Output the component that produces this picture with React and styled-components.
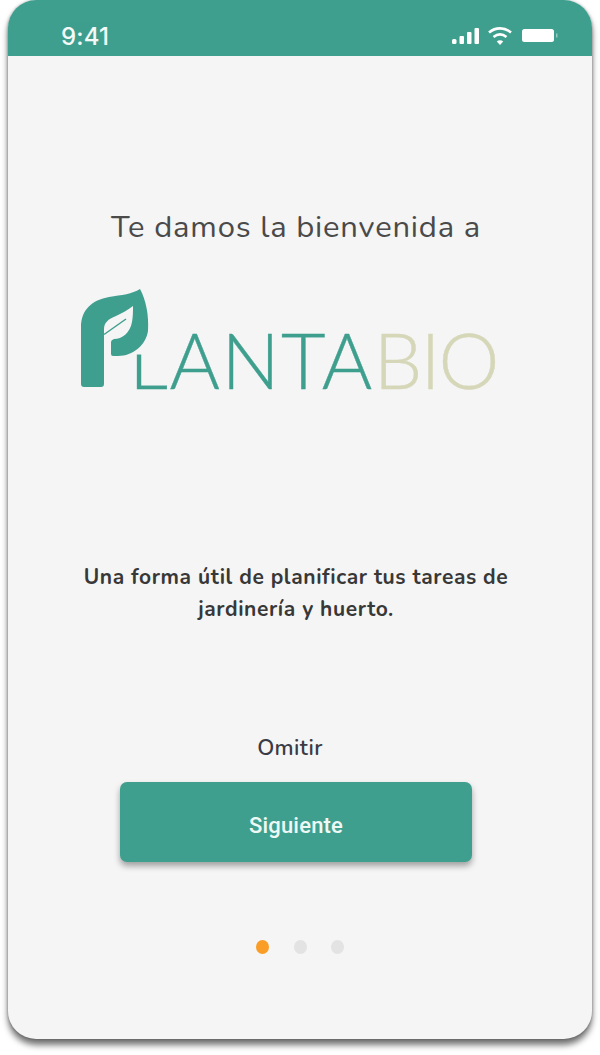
import React from "react";
import styled, { createGlobalStyle } from "styled-components";

const Global = createGlobalStyle`
  html, body { margin: 0; padding: 0; background: #fff; }
  body { width: 600px; height: 1055px; overflow: hidden; font-family: "Noto Sans", sans-serif; }
  * { box-sizing: border-box; }
`;
const Page = styled.div`
  width: 600px; height: 1055px; padding: 0 8px 16px;
`;
const Phone = styled.div`
  height: 1039px; border-radius: 28px; background: #f5f5f5; overflow: hidden;
  display: flex; flex-direction: column;
  box-shadow: 0 6px 6px rgba(0,0,0,.55), 0 0 3px rgba(0,0,0,.3);
`;
const StatusBar = styled.header`
  width: 100%; height: 56px; background: #3f9f8e; color: #fff;
  display: flex; justify-content: space-between; align-items: center;
  padding: 16px 33px 0 53px; flex: none;
`;
const Time = styled.span`
  font: 500 24px "Inter", sans-serif; letter-spacing: .2px; opacity: .95;
`;
const StatusIcons = styled.div`
  display: flex; align-items: center; gap: 8px;
`;
const Content = styled.main`
  flex: 1; display: flex; flex-direction: column; align-items: center; padding-right: 8px;
`;
const Welcome = styled.h1`
  margin: 151px 0 0; font: 400 31px/40px "Nunito", "Lato", sans-serif; color: #4a4a4a;
  letter-spacing: .8px; white-space: nowrap;
`;
const Logo = styled.div`
  display: flex; align-items: flex-end; align-self: flex-start; margin: 40px 0 0 72px; height: 106px;
`;
const LogoWord = styled.span`
  font: 300 77px/68px "Lato", sans-serif; color: ${p => p.$color};
  -webkit-text-stroke: .4px ${p => p.$color};
  letter-spacing: ${p => p.$spacing}; margin-left: ${p => p.$left};
`;
const LeafMark = styled.svg`
  flex: none; position: relative; z-index: 1; overflow: visible; margin-bottom: 3px;
`;
const Tagline = styled.p`
  margin: 168px 0 0; width: 460px; text-align: center; color: #383838;
  font: 700 21px/32px "Nunito", "Lato", sans-serif; letter-spacing: .6px;
`;
const Skip = styled.span`
  margin-top: 109px; font: 600 22px/28px "Nunito", "Lato", sans-serif; color: #3b3b46;
  letter-spacing: .4px; position: relative; left: -6px;
`;
const NextButton = styled.button`
  margin-top: 20px; width: 352px; height: 80px; border: 0; border-radius: 7px; flex: none;
  padding: 6px 0 0; background: #3f9f8e; color: #eef9f6; font: 500 22px "Roboto", sans-serif;
  letter-spacing: .2px; box-shadow: 0 4px 6px rgba(0,0,0,.35);
`;
const Dots = styled.div`
  margin-top: 78px; display: flex; gap: 24.500px; position: relative; left: 4px;
`;
const Dot = styled.span`
  width: 13px; height: 14px; border-radius: 50%; background: ${p => p.$active ? "#f99d27" : "#e3e3e3"};
`;

const Bars = () => (
  <svg width="28" height="18" viewBox="0 0 28 18" fill="#fff">
    <rect x="0" y="12" width="4.500" height="5" rx="1.500" />
    <rect x="7.500" y="9" width="4.500" height="8" rx="1" />
    <rect x="15" y="5" width="4.500" height="12" rx="1" />
    <rect x="22.500" y="1" width="4.500" height="16" rx="1" />
  </svg>
);
const Wifi = () => (
  <svg width="24" height="20" viewBox="0 0 24 20" fill="none" stroke="#fff" strokeWidth="2.600">
    <path d="M1 6.500C7.500 1 16.500 1 23 6.500" />
    <path d="M5.500 11C9.500 7.800 14.500 7.800 18.500 11" />
    <path d="M12 19l-3.200-3.600C10.500 14 13.500 14 15.200 15.400Z" fill="#fff" stroke="none" />
  </svg>
);
const Battery = () => (
  <svg width="37" height="18" viewBox="0 0 37 18" fill="#fff" style={{ marginLeft: 2 }}>
    <rect x="0" y="2" width="32" height="13" rx="2.500" />
    <rect x="34" y="6.500" width="1.500" height="4" opacity=".45" />
  </svg>
);
const LeafP = () => (
  <LeafMark width="74" height="104" viewBox="80 286 74 104">
    <rect x="133" y="330" width="9" height="24.500" fill="#f5f5f5" />
    <path fill="#3f9f8e" d="M81 384V327C81 310 92 300 109 297C122 295 132 294 140 289C146 300 149 315 148 331C146 345 133 356 118 356L113 356Q111 356 111 354V342Q111 340 114 339C122 339 130 333 132 322C133 316 133 311 133 306C128 310 122 313 116 316C108 319 104 323 104 329V384Q104 387 101 387H84Q81 387 81 384Z" />
    <path fill="none" stroke="#3f9f8e" strokeWidth="1.500" d="M104 334.500L126 319" />
  </LeafMark>
);

export default function App() {
  return (
    <Page>
      <Global />
      <Phone>
        <StatusBar>
          <Time>9:41</Time>
          <StatusIcons><Bars /><Wifi /><Battery /></StatusIcons>
        </StatusBar>
        <Content>
          <Welcome>Te damos la bienvenida a</Welcome>
          <Logo>
            <LeafP />
            <LogoWord $color="#3f9f8e" $spacing="1.500px" $left="-25px">LANTA</LogoWord>
            <LogoWord $color="#d5d7b8" $spacing="-2px" $left="0px">BIO</LogoWord>
          </Logo>
          <Tagline>Una forma útil de planificar tus tareas de jardinería y huerto.</Tagline>
          <Skip>Omitir</Skip>
          <NextButton>Siguiente</NextButton>
          <Dots><Dot $active /><Dot /><Dot /></Dots>
        </Content>
      </Phone>
    </Page>
  );
}
